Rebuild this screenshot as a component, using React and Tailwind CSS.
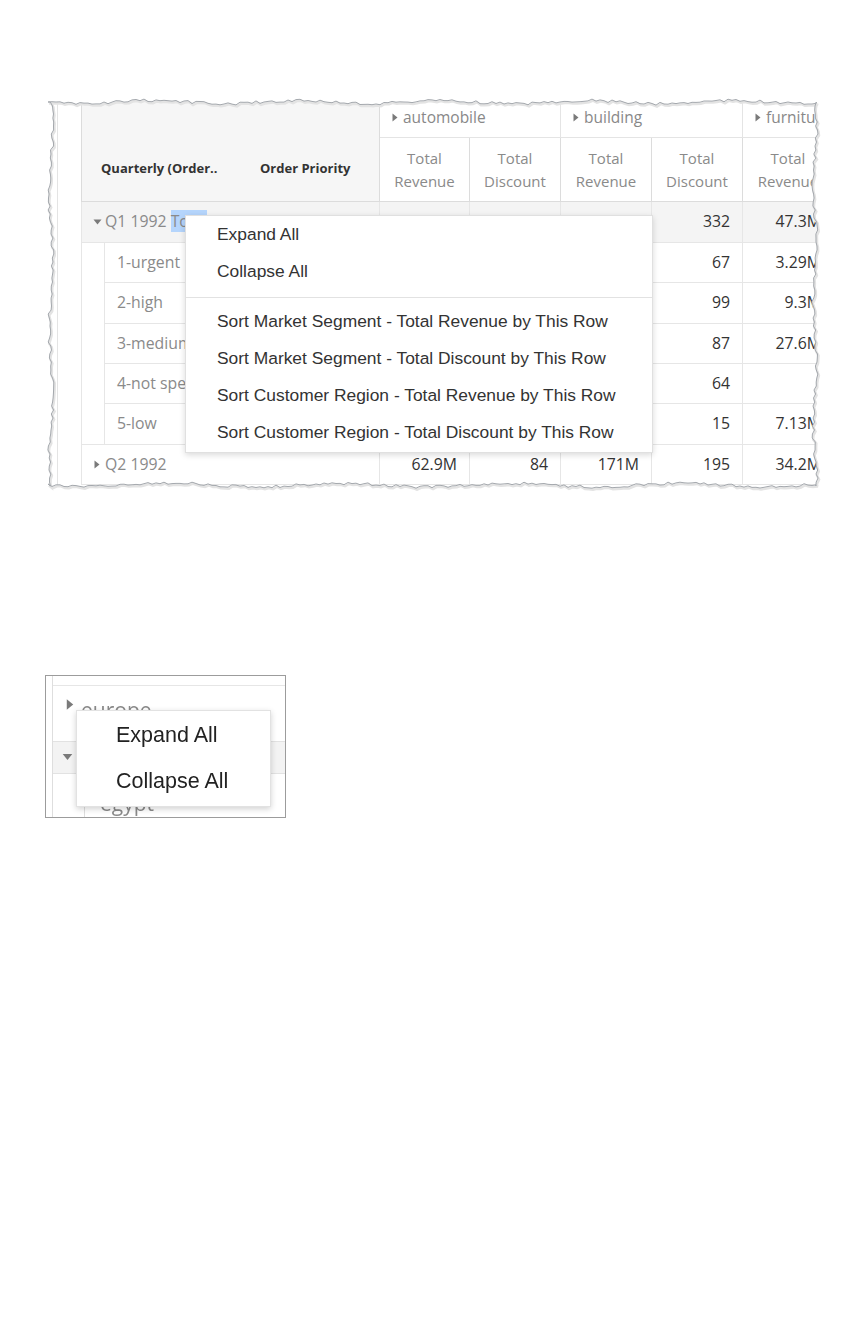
import React from 'react';

// pivot table crop with a torn edge, plus a small zoomed-in crop of the same menu

const COLS = [90, 91, 91, 91, 91];
const COL_W = ['w-[90px]', 'w-[91px]', 'w-[91px]', 'w-[91px]', 'w-[91px]'];

// cells under the context menu stay empty, they can't be seen anyway
const ROWS = [
  { label: 'Q1 1992 ', hl: 'Total', group: 'open', h: 'h-[41px]', bg: true, vals: ['46.5M', '173', '137M', '332', '47.3M'] },
  { label: '1-urgent', h: 'h-[40px]', vals: ['', '', '', '67', '3.29M'] },
  { label: '2-high', h: 'h-[41px]', vals: ['', '', '', '99', '9.3M'] },
  { label: '3-medium', h: 'h-[40px]', vals: ['', '', '', '87', '27.6M'] },
  { label: '4-not specified', h: 'h-[40px]', vals: ['', '', '', '64', ''] },
  { label: '5-low', h: 'h-[41px]', last: true, vals: ['', '', '', '15', '7.13M'] },
  { label: 'Q2 1992', group: 'closed', h: 'h-[40px]', vals: ['62.9M', '84', '171M', '195', '34.2M'] },
];

const MENU = [
  'Sort Market Segment - Total Revenue by This Row',
  'Sort Market Segment - Total Discount by This Row',
  'Sort Customer Region - Total Revenue by This Row',
  'Sort Customer Region - Total Discount by This Row',
];

// torn paper outline, seeded so it looks the same on every render
const FW = 778;
const FH = 395;
const tornPoints = (() => {
  let s = 1234;
  const r = () => {
    s = (s * 9301 + 49297) % 233280;
    return s / 233280;
  };
  const pts = [];
  for (let x = 4; x <= 772; x += 4) pts.push([x, 6 + Math.sin(x / 23) * 1.6 + (r() - 0.5) * 3]);
  for (let y = 6; y <= 390; y += 4) pts.push([771 + Math.sin(y / 19) * 1.8 + (r() - 0.5) * 3, y]);
  for (let x = 772; x >= 4; x -= 4) pts.push([x, 389 + Math.sin(x / 27) * 1.8 + (r() - 0.5) * 3]);
  for (let y = 390; y >= 6; y -= 4) pts.push([7 + Math.sin(y / 21) * 1.8 + (r() - 0.5) * 3, y]);
  return pts;
})();
const tornD = 'M' + tornPoints.map(([x, y]) => `${x.toFixed(1)} ${y.toFixed(1)}`).join(' L') + ' Z';

const TriRight = ({ className = '' }) => (
  <svg width="6" height="9" viewBox="0 0 6 9" className={className}>
    <path d="M0.5 0.5 L5.5 4.5 L0.5 8.5 Z" fill="#7a7a7a" />
  </svg>
);

const TriDown = ({ className = '' }) => (
  <svg width="9" height="6" viewBox="0 0 9 6" className={className}>
    <path d="M0.5 0.5 L8.5 0.5 L4.5 5.5 Z" fill="#7a7a7a" />
  </svg>
);

const TornEdge = () => (
  <svg width={FW} height={FH} className="absolute left-0 top-0 pointer-events-none">
    <path d={`M-2 -2 H${FW + 2} V${FH + 2} H-2 Z ` + tornD} fill="#ffffff" fillRule="evenodd" />
    <path d={tornD} fill="none" stroke="#e3e3e3" strokeWidth="2.5" transform="translate(1 1.5)" />
    <path d={tornD} fill="none" stroke="#a4a8ad" strokeWidth="1" />
  </svg>
);

const PivotCrop = () => (
  <div className="relative ml-[44px] w-[778px] h-[395px] overflow-hidden">
    <div className="pl-[4px] pt-[2px] flex flex-col w-[900px] font-['Open_Sans',sans-serif] text-[15.8px]">
      {/* header */}
      <div className="flex h-[104px] text-[15px]">
        <div className="w-[9px]" />
        <div className="w-[24px] border-l border-[#e4e4e4]" />
        <div className="w-[299px] bg-[#f6f6f6] border-l border-r border-b border-[#dcdcdc] flex items-end">
          <div className="h-[64px] flex items-center text-[13px] font-bold text-[#333]">
            <span className="w-[178px] pl-[19px]">Quarterly (Order..</span>
            <span>Order Priority</span>
          </div>
        </div>
        <div className="flex flex-col">
          <div className="flex h-[40px]">
            {['automobile', 'building', 'furniture'].map((g, i) => (
              <div
                key={g}
                className={`${i === 0 ? 'w-[181px]' : i === 1 ? 'w-[182px]' : 'w-[91px]'} border-r border-b border-[#e4e4e4] flex items-center pl-[12px] gap-[5px] text-[15.5px] text-[#888] overflow-hidden whitespace-nowrap`}
              >
                <TriRight />
                <span>{g}</span>
              </div>
            ))}
          </div>
          <div className="flex h-[64px]">
            {COLS.map((_, i) => (
              <div
                key={i}
                className={`${COL_W[i]} border-r border-b border-[#dcdcdc] flex items-center justify-center text-center leading-[23px] text-[#8a8a8a]`}
              >
                Total
                <br />
                {i % 2 === 0 ? 'Revenue' : 'Discount'}
              </div>
            ))}
          </div>
        </div>
      </div>

      {/* body */}
      {ROWS.map((row) => (
        <div key={row.label} className={`flex ${row.h} ${row.bg ? 'bg-[#f4f4f4]' : ''}`}>
          <div className="w-[9px] bg-white" />
          <div className="w-[24px] border-l border-[#e4e4e4] bg-white" />
          {row.group ? (
            <div className="w-[299px] border-l border-r border-b border-[#e6e6e6] flex items-center pl-[11px] text-[#8a8a8a] whitespace-pre">
              {row.group === 'open' ? <TriDown className="mr-[3px]" /> : <TriRight className="ml-[1px] mr-[5px]" />}
              <span>
                {row.label}
                {row.hl && <span className="bg-[#b5d5fc]">{row.hl}</span>}
              </span>
            </div>
          ) : (
            <div className="w-[299px] flex">
              <div className={`w-[24px] border-l border-r border-[#e6e6e6] ${row.last ? 'border-b' : ''}`} />
              <div className="flex-1 border-r border-b border-[#e6e6e6] flex items-center pl-[12px] text-[#8a8a8a] whitespace-nowrap">
                {row.label}
              </div>
            </div>
          )}
          {row.vals.map((v, i) => (
            <div
              key={i}
              className={`${COL_W[i]} border-r border-b border-[#e6e6e6] flex items-center justify-end pr-[12px] text-[#333]`}
            >
              {v}
            </div>
          ))}
        </div>
      ))}
    </div>

    {/* context menu */}
    <div className="absolute left-[141px] top-[119px] w-[468px] h-[238px] bg-white border border-[#e0e0e0] shadow-[0_2px_6px_rgba(0,0,0,0.15)] font-['Liberation_Sans',Arial,sans-serif] text-[17.4px] text-[#333]">
      {['Expand All', 'Collapse All'].map((t) => (
        <div key={t} className="h-[37px] flex items-center pl-[31px]">{t}</div>
      ))}
      <div className="pt-[7px] pb-[5px]">
        <div className="h-px bg-[#e2e2e2]" />
      </div>
      {MENU.map((t) => (
        <div key={t} className="h-[37px] flex items-center pl-[31px] whitespace-nowrap">{t}</div>
      ))}
    </div>

    <TornEdge />
  </div>
);

const SmallCrop = () => (
  <div className="relative ml-[45px] mt-[184px] w-[241px] h-[143px] border border-[#9c9c9c] overflow-hidden bg-white">
    <div className="blur-[0.4px] flex h-full">
      <div className="w-[6px]" />
      <div className="flex-1 border-l border-[#dedede] flex flex-col">
        <div className="h-[11px] border-b border-[#e6e6e6]" />
        <div className="h-[59px] flex items-start pt-[10px] pl-[14px] gap-[8px] text-[21px] text-[#8a8a8a] font-['Open_Sans',sans-serif]">
          <TriRight className="mt-[4px] scale-[1.3]" />
          <span className="leading-[28px]">europe</span>
        </div>
        <div className="h-[36px] bg-[#f3f3f3] border-t border-b border-[#e2e2e2] flex items-center pl-[10px]">
          <TriDown className="scale-[1.2]" />
        </div>
        <div className="flex flex-1">
          <div className="w-[32px] border-r border-[#dedede]" />
          <div className="pl-[15px] pt-[15px] text-[21px] text-[#8a8a8a] font-['Open_Sans',sans-serif] leading-[28px]">egypt</div>
        </div>
      </div>
    </div>
    <div className="absolute left-[30px] top-[34px] w-[195px] h-[97px] bg-white border border-[#e2e2e2] shadow-[0_2px_6px_rgba(0,0,0,0.18)] pt-px font-['Liberation_Sans',Arial,sans-serif] text-[21.5px] text-[#222] blur-[0.3px]">
      <div className="h-[46px] flex items-center pl-[39px]">Expand All</div>
      <div className="h-[46px] flex items-center pl-[39px]">Collapse All</div>
    </div>
  </div>
);

export default function App() {
  return (
    <div className="w-[864px] min-h-[1344px] bg-white pt-[96px]">
      <PivotCrop />
      <SmallCrop />
    </div>
  );
}
